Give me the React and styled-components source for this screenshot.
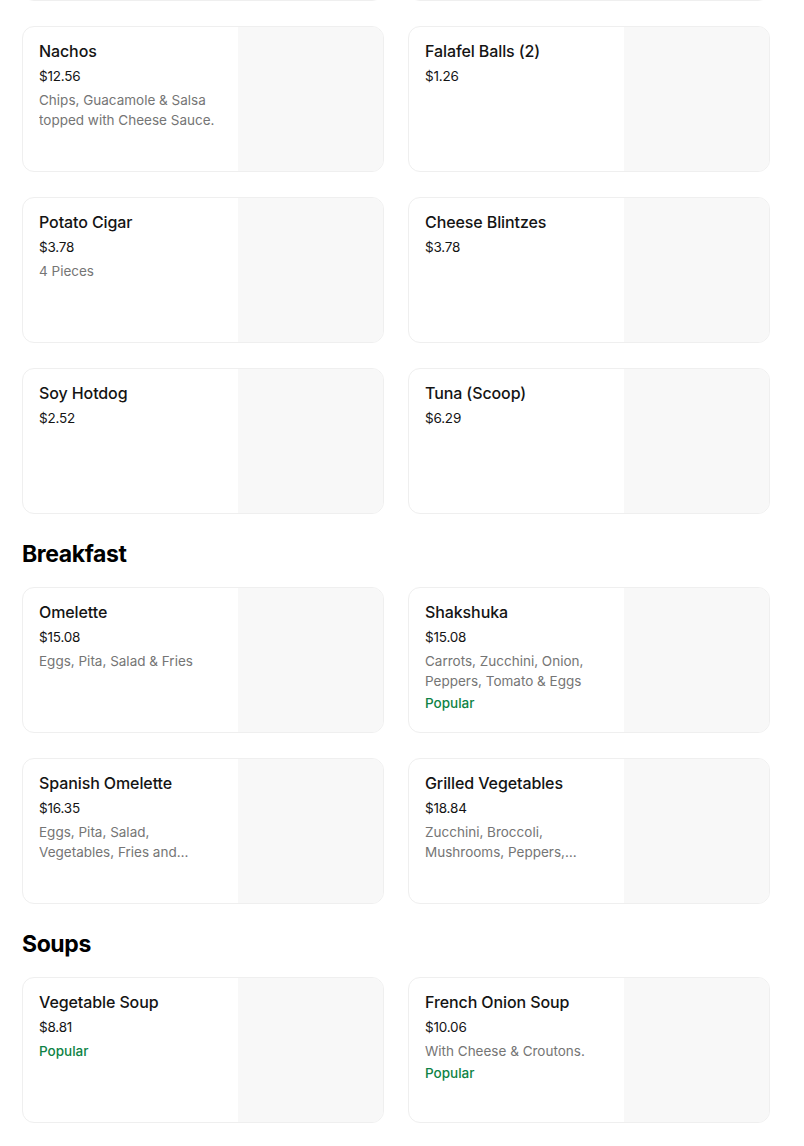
import React from 'react';
import styled, { createGlobalStyle } from 'styled-components';

const GlobalStyle = createGlobalStyle`
  html, body {
    margin: 0;
    padding: 0;
    background: #ffffff;
  }
  body {
    font-family: Inter, "Noto Sans", "Liberation Sans", sans-serif;
    color: #000000;
    -webkit-font-smoothing: antialiased;
  }
`;

const Page = styled.main`
  width: 804px;
  height: 1146px;
  overflow: hidden;
`;

// the menu is scrolled: the previous row of cards ends right at the top edge
const Scroller = styled.div`
  margin-top: -145px;
  padding: 0 34px 0 22px;
`;

const SectionTitle = styled.h2`
  margin: 24px 0 17px;
  font-size: 23px;
  line-height: 32px;
  font-weight: 700;
  letter-spacing: -0.4px;
  color: #000000;
`;

const Grid = styled.div`
  display: grid;
  grid-template-columns: 362px 362px;
  column-gap: 24px;
  row-gap: 25px;
`;

const Card = styled.div`
  display: flex;
  height: 146px;
  box-sizing: border-box;
  border: 1px solid #efefef;
  border-radius: 12px;
  overflow: hidden;
  background: #ffffff;
`;

const Info = styled.div`
  flex: 1;
  min-width: 0;
  padding: 12px 16px;
  display: flex;
  flex-direction: column;
`;

const Name = styled.div`
  font-size: 16px;
  line-height: 24px;
  font-weight: 500;
  letter-spacing: -0.1px;
  color: #141414;
`;

const Price = styled.div`
  margin-top: 3px;
  font-size: 13.5px;
  line-height: 20px;
  color: #141414;
  letter-spacing: -0.2px;
`;

const Description = styled.div`
  margin-top: 4px;
  font-size: 13.5px;
  line-height: 20px;
  color: #757575;
  display: -webkit-box;
  -webkit-line-clamp: 2;
  -webkit-box-orient: vertical;
  overflow: hidden;
`;

const Badge = styled.div`
  margin-top: ${({ $afterText }) => ($afterText ? '2px' : '4px')};
  font-size: 13.5px;
  line-height: 20px;
  font-weight: 500;
  color: #0e8345;
`;

const Photo = styled.div`
  width: 145px;
  flex-shrink: 0;
  background: #f8f8f8;
`;

const sections = [
  {
    id: 'appetizers',
    items: [
      { name: 'Hummus', price: '$6.29' },
      { name: 'Baba Ganoush', price: '$6.29' },
      { name: 'Nachos', price: '$12.56', description: 'Chips, Guacamole & Salsa topped with Cheese Sauce.' },
      { name: 'Falafel Balls (2)', price: '$1.26' },
      { name: 'Potato Cigar', price: '$3.78', description: '4 Pieces' },
      { name: 'Cheese Blintzes', price: '$3.78' },
      { name: 'Soy Hotdog', price: '$2.52' },
      { name: 'Tuna (Scoop)', price: '$6.29' },
    ],
  },
  {
    id: 'breakfast',
    title: 'Breakfast',
    items: [
      { name: 'Omelette', price: '$15.08', description: 'Eggs, Pita, Salad & Fries' },
      { name: 'Shakshuka', price: '$15.08', description: 'Carrots, Zucchini, Onion, Peppers, Tomato & Eggs', popular: true },
      { name: 'Spanish Omelette', price: '$16.35', description: 'Eggs, Pita, Salad, Vegetables, Fries and Homemade Sauces' },
      { name: 'Grilled Vegetables', price: '$18.84', description: 'Zucchini, Broccoli, Mushrooms, Peppers, Eggplant & Onion' },
    ],
  },
  {
    id: 'soups',
    title: 'Soups',
    items: [
      { name: 'Vegetable Soup', price: '$8.81', popular: true },
      { name: 'French Onion Soup', price: '$10.06', description: 'With Cheese & Croutons.', popular: true },
      { name: 'Lentil Soup', price: '$8.81' },
      { name: 'Chicken Soup', price: '$8.81' },
    ],
  },
];

const MenuItem = ({ name, price, description, popular }) => (
  <Card>
    <Info>
      <Name>{name}</Name>
      <Price>{price}</Price>
      {description && <Description>{description}</Description>}
      {popular && <Badge $afterText={!!description}>Popular</Badge>}
    </Info>
    <Photo />
  </Card>
);

const App = () => (
  <Page>
    <GlobalStyle />
    <Scroller>
      {sections.map((section) => (
        <section key={section.id}>
          {section.title && <SectionTitle>{section.title}</SectionTitle>}
          <Grid>
            {section.items.map((item) => (
              <MenuItem key={item.name} {...item} />
            ))}
          </Grid>
        </section>
      ))}
    </Scroller>
  </Page>
);

export default App;
